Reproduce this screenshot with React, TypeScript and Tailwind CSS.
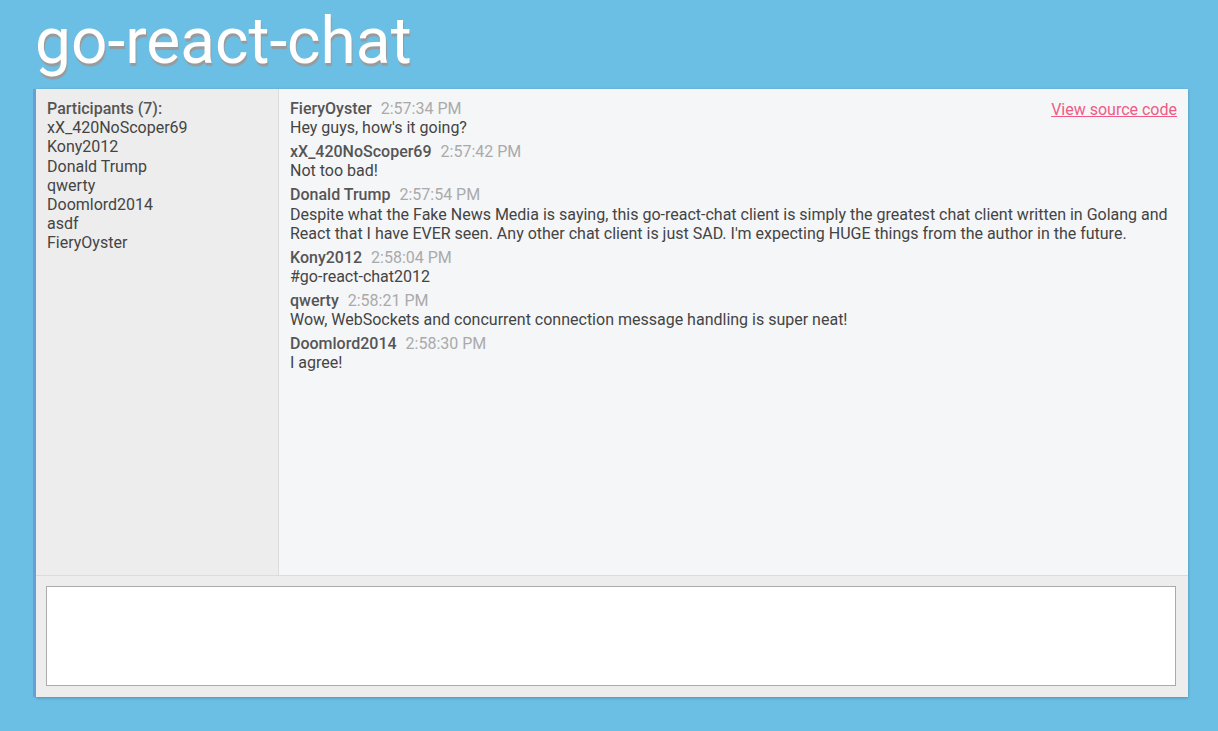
const participants = [
  "xX_420NoScoper69",
  "Kony2012",
  "Donald Trump",
  "qwerty",
  "Doomlord2014",
  "asdf",
  "FieryOyster",
];

const messages = [
  { user: "FieryOyster", time: "2:57:34 PM", text: "Hey guys, how's it going?" },
  { user: "xX_420NoScoper69", time: "2:57:42 PM", text: "Not too bad!" },
  {
    user: "Donald Trump",
    time: "2:57:54 PM",
    text: "Despite what the Fake News Media is saying, this go-react-chat client is simply the greatest chat client written in Golang and React that I have EVER seen. Any other chat client is just SAD. I'm expecting HUGE things from the author in the future.",
  },
  { user: "Kony2012", time: "2:58:04 PM", text: "#go-react-chat2012" },
  {
    user: "qwerty",
    time: "2:58:21 PM",
    text: "Wow, WebSockets and concurrent connection message handling is super neat!",
  },
  { user: "Doomlord2014", time: "2:58:30 PM", text: "I agree!" },
];

const App = () => {
  return (
    <div className="flex h-[731px] flex-col bg-[#6bbfe5] font-['Roboto',sans-serif] text-[16px] leading-[1.2] text-[#444]">
      <h1 className="h-[89px] pl-[35px] pt-[4px] text-[64px] leading-[76px] text-white [text-shadow:1px_3px_1px_#9a9a9a]">
        go-react-chat
      </h1>
      <div className="ml-[36px] mr-[30px] flex h-[608px] flex-col shadow-[-3px_0_0_#6a9ed6,0_1px_3px_rgba(0,0,0,0.25)]">
        <div className="flex min-h-0 flex-1">
          <div className="w-[243px] border-r border-[#dcdcdc] bg-[#ededed] px-[11px] py-[10px]">
            <div className="font-medium text-[#555]">Participants (7):</div>
            {participants.map((p) => (
              <div key={p}>{p}</div>
            ))}
          </div>
          <div className="relative flex-1 bg-[#f5f6f8] py-[10px] pl-[11px] pr-[11px]">
            <a
              href="#"
              className="absolute right-[11px] top-[11px] text-[#ef5b85] underline"
            >
              View source code
            </a>
            {messages.map((m) => (
              <div key={m.time} className="mb-[4.8px]">
                <div>
                  <span className="font-medium text-[#555]">{m.user}</span>
                  <span className="ml-[9px] text-[#aaa]">{m.time}</span>
                </div>
                <div>{m.text}</div>
              </div>
            ))}
          </div>
        </div>
        <div className="h-[122px] border-t border-[#dcdcdc] bg-[#ededed] pl-[10px] pr-[12px] pt-[10px]">
          <textarea className="block h-[100px] w-full resize-none border border-[#aaa] bg-white outline-none" />
        </div>
      </div>
    </div>
  );
};

export default App;
